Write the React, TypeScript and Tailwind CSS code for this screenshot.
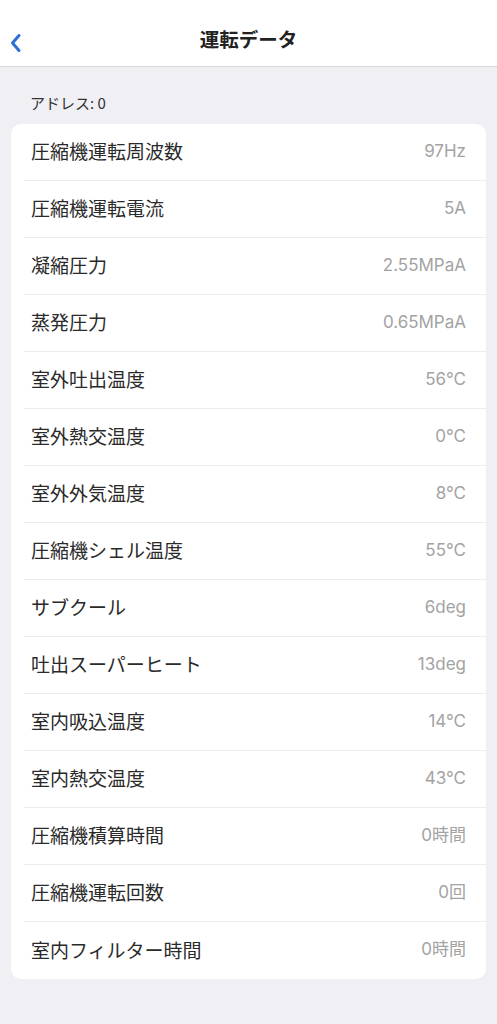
const rows: [string, string][] = [
  ["圧縮機運転周波数", "97Hz"],
  ["圧縮機運転電流", "5A"],
  ["凝縮圧力", "2.55MPaA"],
  ["蒸発圧力", "0.65MPaA"],
  ["室外吐出温度", "56°C"],
  ["室外熱交温度", "0°C"],
  ["室外外気温度", "8°C"],
  ["圧縮機シェル温度", "55°C"],
  ["サブクール", "6deg"],
  ["吐出スーパーヒート", "13deg"],
  ["室内吸込温度", "14°C"],
  ["室内熱交温度", "43°C"],
  ["圧縮機積算時間", "0時間"],
  ["圧縮機運転回数", "0回"],
  ["室内フィルター時間", "0時間"],
];

const font = { fontFamily: '"Noto Sans CJK JP", "Noto Sans", sans-serif' };
const valueFont = { fontFamily: 'Inter, "Noto Sans CJK JP", sans-serif' };

export default function App() {
  return (
    <div className="min-h-[1024px] w-[497px] bg-[#efeff4]" style={font}>
      <header className="relative flex h-[67px] items-center justify-center border-b border-[#d8d8dc] bg-white">
        <button className="absolute left-[5px] top-[29px] p-1">
          <svg width="13" height="20" viewBox="0 0 13 20" fill="none">
            <path
              d="M10 2.5 L3.5 10 L10 17.5"
              stroke="#2f6fd8"
              strokeWidth="3"
              strokeLinecap="round"
              strokeLinejoin="round"
            />
          </svg>
        </button>
        <h1 className="mt-[12px] text-[19.5px] font-bold text-[#222]">運転データ</h1>
      </header>

      <div className="px-[30px] pb-[9px] pt-[25px] text-[15px] text-[#333]">アドレス: 0</div>

      <div className="mx-[11px] overflow-hidden rounded-[10px] bg-white">
        {rows.map(([label, value], i) => (
          <div key={i} className="pl-[13px]">
            <div
              className={
                "flex h-[57px] items-center justify-between pr-[20px] " +
                (i < rows.length - 1 ? "border-b border-[#ececee]" : "")
              }
            >
              <span className="pl-[7px] text-[19px] text-[#2a2a2a]">{label}</span>
              <span className="text-[17px] text-[#a3a3a3]" style={valueFont}>
                {value}
              </span>
            </div>
          </div>
        ))}
      </div>
    </div>
  );
}
